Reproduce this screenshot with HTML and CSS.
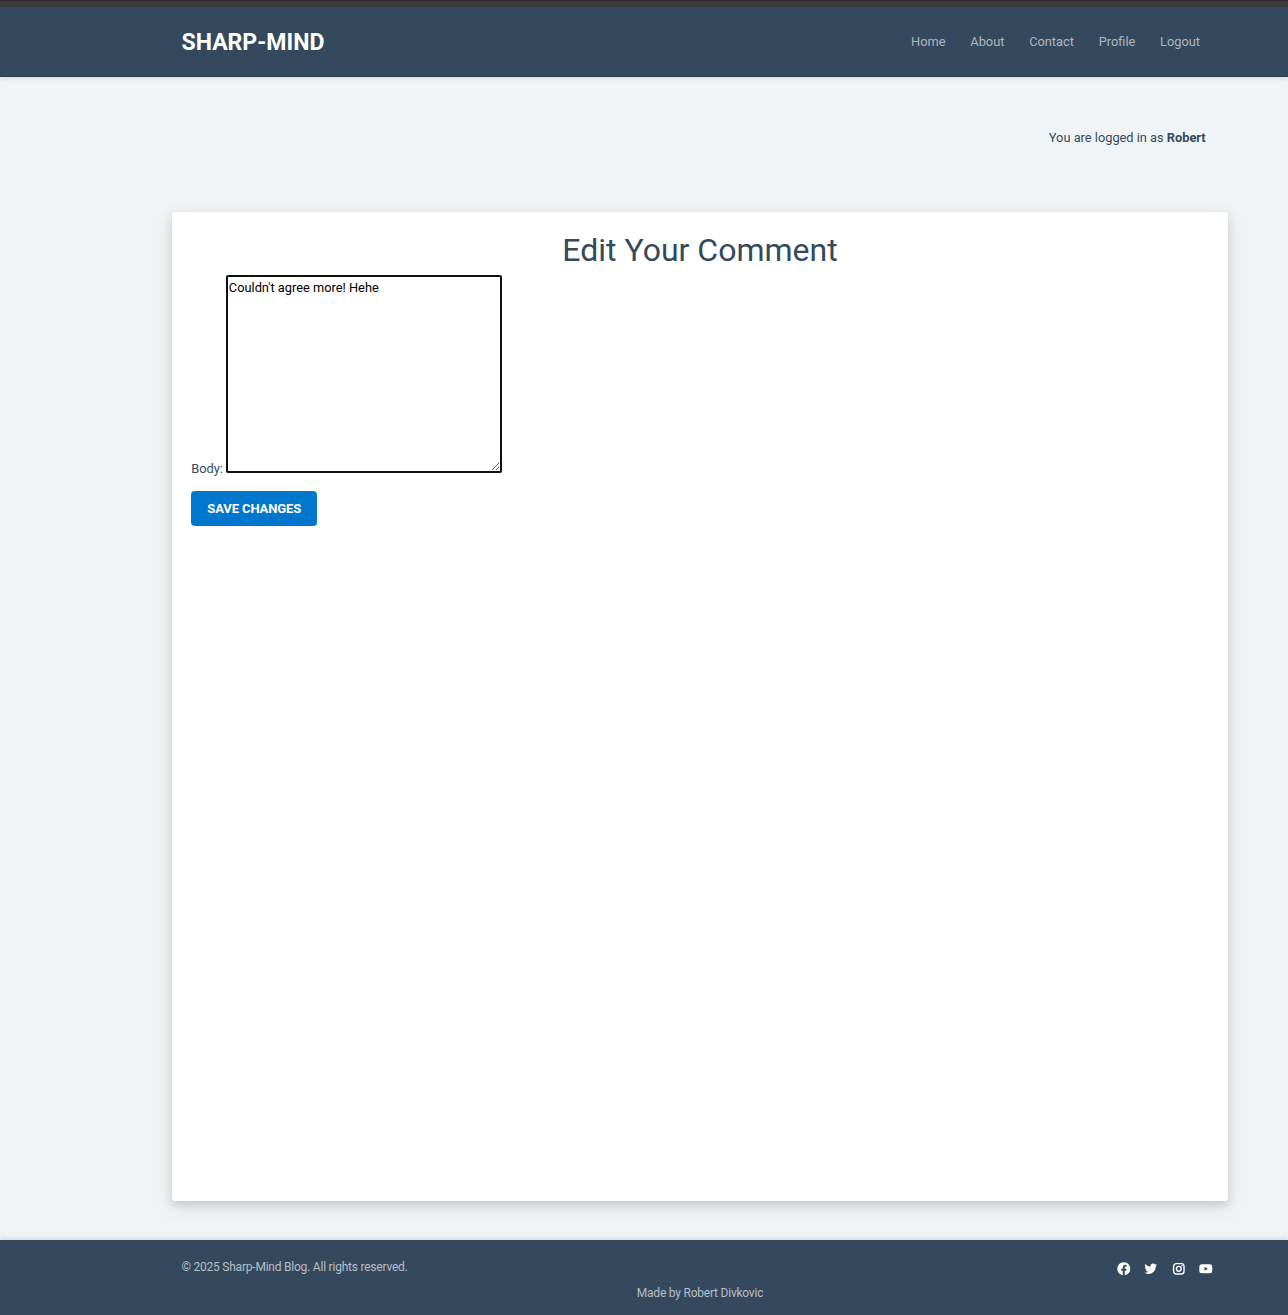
FILE: index.html
```html
<!DOCTYPE html>
<html lang="en">
<head>
<meta charset="utf-8">
<title>Sharp-Mind</title>
<link rel="stylesheet" href="styles.css">
</head>
<body>
<div class="topstrip"></div>
<header class="header">
  <div class="container header-row">
    <a class="logo">SHARP-MIND</a>
    <nav class="nav"><a>Home</a><a>About</a><a>Contact</a><a>Profile</a><a>Logout</a></nav>
  </div>
</header>
<main class="main">
  <p class="status">You are logged in as <strong>Robert</strong></p>
  <section class="card">
    <h1 class="title">Edit Your Comment</h1>
    <form>
      <div class="field"><label for="body">Body:</label><textarea class="body-input" id="body">Couldn't agree more! Hehe</textarea></div>
      <button class="save" type="button">SAVE CHANGES</button>
    </form>
  </section>
</main>
<footer class="footer">
  <div class="container footer-row">
    <span class="copyright">© 2025 Sharp-Mind Blog. All rights reserved.</span>
    <div class="socials">
      <svg viewBox="0 0 24 24"><path d="M12.001 2.002c-5.522 0-9.999 4.477-9.999 9.999 0 4.99 3.656 9.126 8.437 9.879v-6.988h-2.54v-2.891h2.54V9.798c0-2.508 1.493-3.891 3.776-3.891 1.094 0 2.24.195 2.24.195v2.459h-1.264c-1.24 0-1.628.772-1.628 1.563v1.875h2.771l-.443 2.891h-2.328v6.988C18.344 21.129 22 16.992 22 12.001c0-5.522-4.477-9.999-9.999-9.999z"/></svg>
      <svg viewBox="0 0 24 24"><path d="M19.633 7.997c.013.175.013.349.013.523 0 5.325-4.053 11.461-11.46 11.461-2.282 0-4.402-.661-6.186-1.809.324.037.636.05.973.05a8.07 8.07 0 0 0 5.001-1.721 4.036 4.036 0 0 1-3.767-2.793c.249.037.499.062.761.062.361 0 .724-.05 1.061-.137a4.027 4.027 0 0 1-3.23-3.953v-.05c.537.299 1.16.486 1.82.511a4.022 4.022 0 0 1-1.796-3.354c0-.748.199-1.434.548-2.032a11.457 11.457 0 0 0 8.306 4.215c-.062-.3-.1-.611-.1-.923a4.026 4.026 0 0 1 4.028-4.028c1.16 0 2.207.486 2.943 1.272a7.957 7.957 0 0 0 2.556-.973 4.02 4.02 0 0 1-1.771 2.22 8.073 8.073 0 0 0 2.319-.624 8.645 8.645 0 0 1-2.019 2.083z"/></svg>
      <svg viewBox="0 0 24 24"><g class="outline"><rect x="3.95" y="3.95" width="16.1" height="16.1" rx="4.2"/><circle cx="12" cy="12" r="3.7"/></g><circle cx="16.8" cy="7.2" r="1.2"/></svg>
      <svg viewBox="0 0 24 24"><path d="M21.593 7.203a2.506 2.506 0 0 0-1.762-1.766C18.265 5.007 12 5 12 5s-6.264-.007-7.831.404a2.56 2.56 0 0 0-1.766 1.778c-.413 1.566-.417 4.814-.417 4.814s-.004 3.264.406 4.814c.23.857.905 1.534 1.763 1.765 1.582.43 7.83.437 7.83.437s6.265.007 7.831-.403a2.515 2.515 0 0 0 1.767-1.763c.414-1.565.417-4.812.417-4.812s.02-3.265-.407-4.831zM9.996 15.005l.005-6 5.207 3.005-5.212 2.995z"/></svg>
    </div>
  </div>
  <p class="made">Made by Robert Divkovic</p>
</footer>
</body>
</html>
```
FILE: styles.css
```css
* { box-sizing: border-box; margin: 0; padding: 0; }

body {
  height: 1315px;
  overflow: hidden;
  display: flex;
  flex-direction: column;
  background: #f0f4f7;
  color: #34495e;
  font: 12.8px/20px Roboto, sans-serif;
}

.topstrip { height: 7px; background: #3b3b3b; border-top: 1px solid #2a2a2a; }

.container { margin: 0 60px 0 172px; display: flex; justify-content: space-between; }

.header {
  height: 70px;
  background: #34495e;
  border-bottom: 1px solid #2c3e50;
  box-shadow: 0 2px 4px rgba(0, 0, 0, 0.1);
}
.header-row { height: 69px; align-items: center; padding: 0 28px 0 9.5px; }
.logo { color: #fff; font-size: 23.04px; font-weight: 700; padding-top: 2px; }
.nav { display: flex; gap: 24.8px; color: #b0b7be; }

.main { flex: 1; padding: 51px 60px 39px 172px; display: flex; flex-direction: column; }
.status { text-align: right; padding-right: 22.3px; height: 84px; }

.card {
  flex: 1;
  background: #fff;
  border-radius: 3px;
  padding: 19.2px;
  box-shadow: 0 4px 8px rgba(0, 0, 0, 0.1), 0 6px 20px rgba(0, 0, 0, 0.1);
}
.title { text-align: center; font-size: 32px; font-weight: 400; line-height: 38px; margin-bottom: 5.8px; }
.field { display: flex; align-items: flex-end; gap: 3px; line-height: 18px; }
.field label { margin-bottom: -5px; }
.body-input {
  width: 276px;
  height: 198px;
  border: 2px solid #101010;
  border-radius: 2px;
  outline: none;
  padding: 2px 1px;
  color: #000;
  background: #fff;
  font: 12.8px/17px Roboto, sans-serif;
}
.save {
  margin-top: 18px;
  padding-top: 1px;
  width: 126px;
  height: 35px;
  border: 0;
  border-radius: 4px;
  background: #0077cc;
  color: #fff;
  font: 700 13px/20px Roboto, sans-serif;
  letter-spacing: -0.12px;
}

.footer {
  height: 75px;
  background: #34495e;
  color: #b8bec4;
  font-size: 12px;
  letter-spacing: -0.22px;
  box-shadow: 0 -2px 4px rgba(0, 0, 0, 0.1);
}
.footer-row { padding: 17px 14.5px 0 9.5px; height: 43px; }
.socials { display: flex; gap: 11.7px; padding-top: 3.8px; }
.socials svg { width: 15.6px; height: 15.6px; fill: #fff; }
.outline { fill: none; stroke: #fff; stroke-width: 2.1; }
.made { margin: 0 60px 0 172px; text-align: center; }
```
